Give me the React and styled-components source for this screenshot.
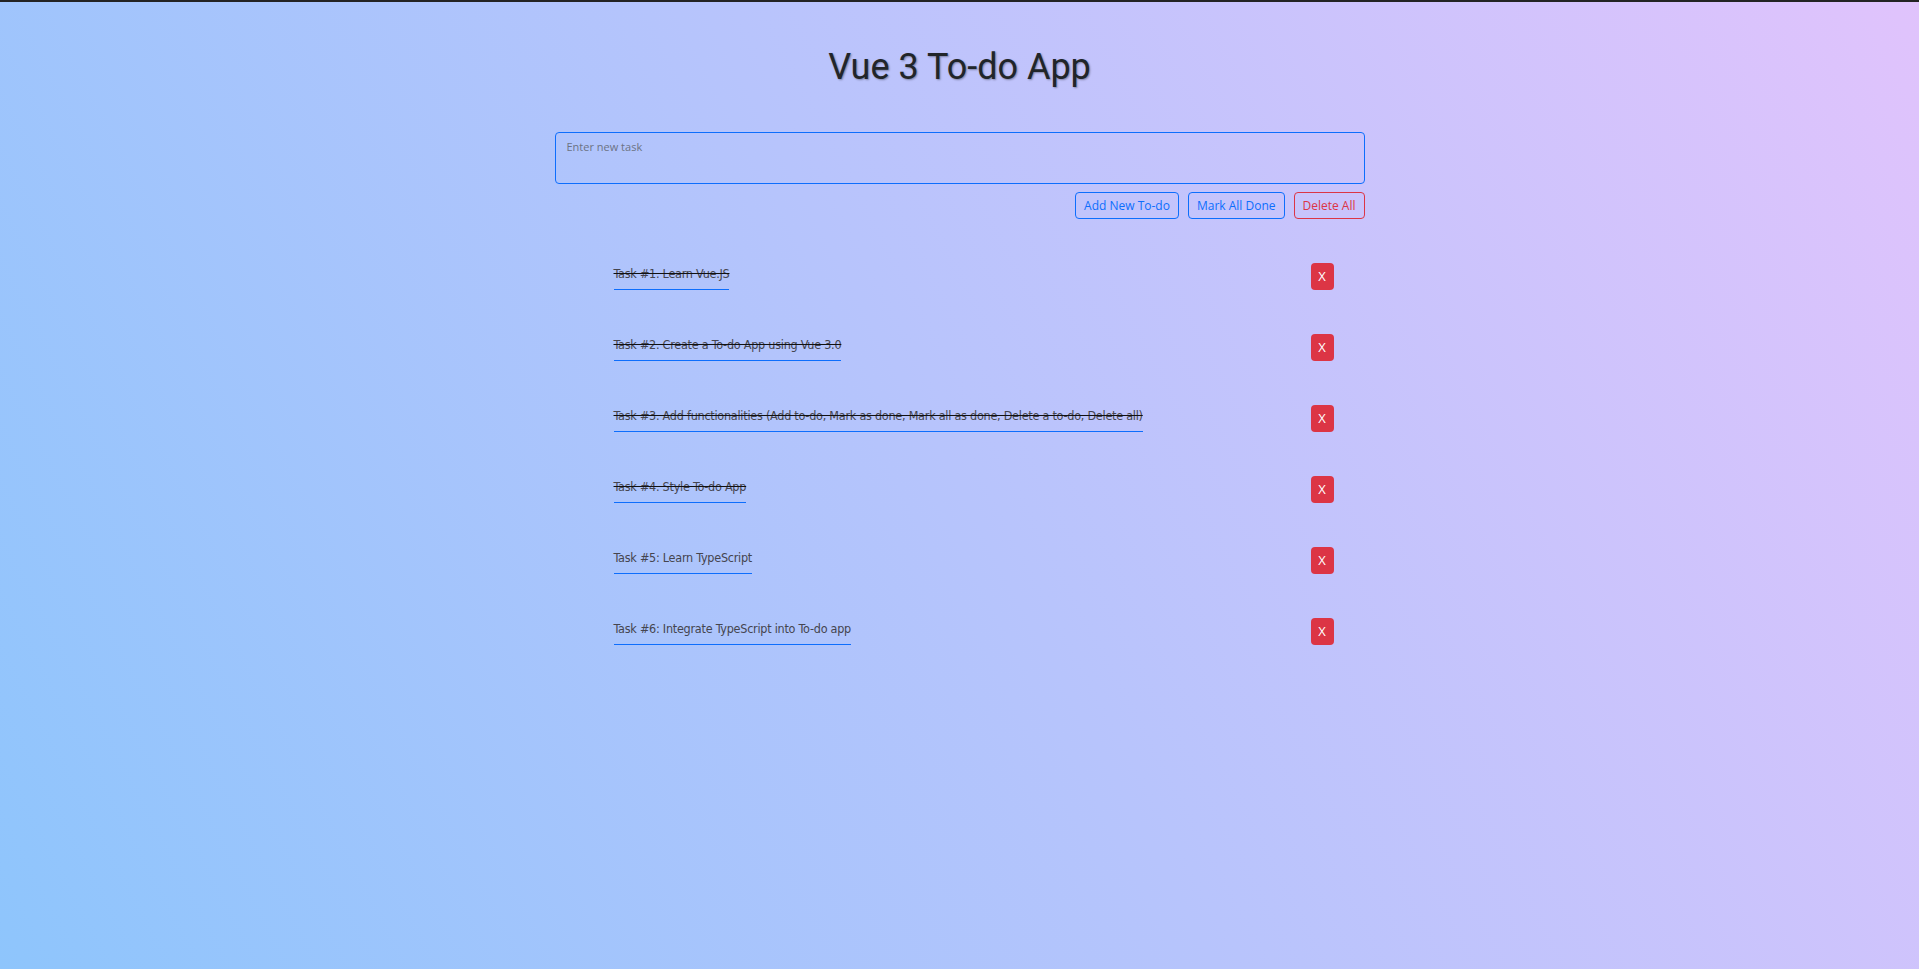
import React, { useState } from "react";
import styled, { createGlobalStyle } from "styled-components";

const GlobalStyle = createGlobalStyle`
  html, body {
    margin: 0;
    padding: 0;
  }
  * {
    box-sizing: border-box;
  }
`;

const initialTodos = [
  { id: 1, text: "Task #1. Learn Vue.JS", done: true },
  { id: 2, text: "Task #2. Create a To-do App using Vue 3.0", done: true },
  {
    id: 3,
    text: "Task #3. Add functionalities (Add to-do, Mark as done, Mark all as done, Delete a to-do, Delete all)",
    done: true,
  },
  { id: 4, text: "Task #4. Style To-do App", done: true },
  { id: 5, text: "Task #5: Learn TypeScript", done: false },
  { id: 6, text: "Task #6: Integrate TypeScript into To-do app", done: false },
];

const App = () => {
  const [todos, setTodos] = useState(initialTodos);
  const [draft, setDraft] = useState("");

  const addTodo = () => {
    if (!draft.trim()) return;
    setTodos([...todos, { id: Date.now(), text: draft, done: false }]);
    setDraft("");
  };

  const toggle = (id) =>
    setTodos(todos.map((t) => (t.id === id ? { ...t, done: !t.done } : t)));

  return (
    <>
      <GlobalStyle />
      <Page>
        <TopBar />
        <Wrapper>
          <Title>Vue 3 To-do App</Title>
          <TaskInput
            placeholder="Enter new task"
            value={draft}
            onChange={(e) => setDraft(e.target.value)}
          />
          <Actions>
            <OutlineButton onClick={addTodo}>Add New To-do</OutlineButton>
            <OutlineButton
              onClick={() => setTodos(todos.map((t) => ({ ...t, done: true })))}
            >
              Mark All Done
            </OutlineButton>
            <OutlineButton $danger onClick={() => setTodos([])}>
              Delete All
            </OutlineButton>
          </Actions>
          <TodoList>
            {todos.map((todo) => (
              <TodoRow key={todo.id}>
                <TodoLabel $done={todo.done} onClick={() => toggle(todo.id)}>
                  {todo.text}
                </TodoLabel>
                <RemoveButton
                  onClick={() => setTodos(todos.filter((t) => t.id !== todo.id))}
                >
                  X
                </RemoveButton>
              </TodoRow>
            ))}
          </TodoList>
        </Wrapper>
      </Page>
    </>
  );
};

const Page = styled.div`
  min-height: 100vh;
  background: linear-gradient(62deg, #8ec5fc 0%, #e0c3fc 100%);
  padding-bottom: 40px;
`;

const TopBar = styled.div`
  height: 2px;
  background: #232323;
`;

const Wrapper = styled.div`
  width: 810px;
  margin: 0 auto;
  display: flex;
  flex-direction: column;
`;

const Title = styled.h1`
  margin: 44px 0 43px;
  font-family: Roboto, "Liberation Sans", sans-serif;
  font-size: 36px;
  font-weight: 400;
  line-height: 1.2;
  text-align: center;
  color: #212529;
  text-shadow: 1px 1px 2px rgba(0, 0, 0, 0.35);
`;

const TaskInput = styled.textarea`
  display: block;
  width: 100%;
  height: 52px;
  padding: 6px 11px;
  resize: none;
  border: 1px solid #0d6efd;
  border-radius: 4px;
  background: transparent;
  font-family: "Open Sans", "Noto Sans", sans-serif;
  font-size: 11px;
  line-height: 1.5;
  color: #212529;
  outline: none;

  &::placeholder {
    color: #6c7384;
  }
`;

const Actions = styled.div`
  display: flex;
  justify-content: flex-end;
  gap: 9px;
  margin-top: 8px;
`;

const OutlineButton = styled.button`
  height: 27px;
  padding: 0 8px;
  border: 1px solid ${(p) => (p.$danger ? "#dc3545" : "#0d6efd")};
  border-radius: 4px;
  background: transparent;
  color: ${(p) => (p.$danger ? "#dc3545" : "#0d6efd")};
  font-family: "Open Sans", "Noto Sans", sans-serif;
  font-size: 12px;
  line-height: 1;
  cursor: pointer;
`;

const TodoList = styled.ul`
  list-style: none;
  margin: 0;
  padding: 44px 31px 0 59px;
  display: flex;
  flex-direction: column;
  gap: 44px;
`;

const TodoRow = styled.li`
  display: flex;
  justify-content: space-between;
  align-items: flex-start;
  min-height: 27px;
`;

const TodoLabel = styled.span`
  padding: 1px 0 5px;
  border-bottom: 1px solid #0d6efd;
  font-family: "DejaVu Sans Condensed", "DejaVu Sans", sans-serif;
  font-stretch: condensed;
  font-size: 12.5px;
  letter-spacing: -0.25px;
  line-height: 20px;
  color: #45454f;
  text-decoration: ${(p) => (p.$done ? "line-through" : "none")};
  text-decoration-color: #111;
  cursor: pointer;
`;

const RemoveButton = styled.button`
  width: 23px;
  height: 27px;
  padding: 0;
  border: none;
  border-radius: 4px;
  background: #dc3545;
  color: #fff;
  font-family: "Open Sans", "Noto Sans", sans-serif;
  font-size: 13px;
  line-height: 1;
  cursor: pointer;
`;

export default App;
